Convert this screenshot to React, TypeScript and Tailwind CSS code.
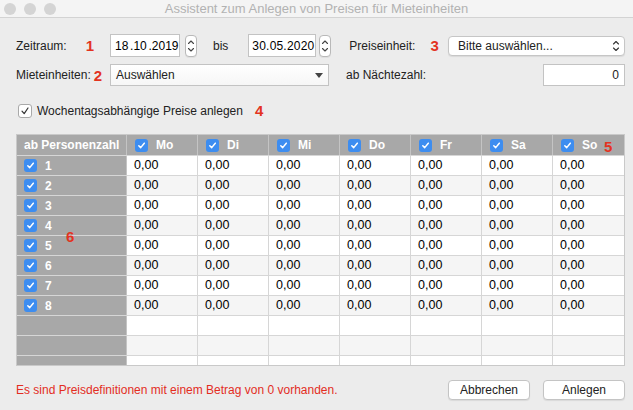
import React from 'react';

const days = ['Mo', 'Di', 'Mi', 'Do', 'Fr', 'Sa', 'So'];
const persons = [1, 2, 3, 4, 5, 6, 7, 8];

function BlueCheck() {
  return (
    <span className="inline-flex h-[13px] w-[13px] shrink-0 items-center justify-center rounded-[3px] bg-[#3d8df0]">
      <svg width="9" height="9" viewBox="0 0 9 9" fill="none">
        <path d="M1.8 4.7 L3.7 6.6 L7.3 2.2" stroke="white" strokeWidth="1.5" strokeLinecap="round" strokeLinejoin="round" />
      </svg>
    </span>
  );
}

function Stepper() {
  return (
    <div className="flex h-[22px] w-[12px] flex-col items-center justify-center rounded-[4px] border border-[#b9b9b9] bg-white shadow-[0_1px_0_rgba(0,0,0,0.05)]">
      <svg width="8" height="16" viewBox="0 0 8 16" fill="none">
        <path d="M1.5 5.5 L4 3 L6.5 5.5" stroke="#444" strokeWidth="1.1" strokeLinecap="round" strokeLinejoin="round" />
        <path d="M1.5 10.5 L4 13 L6.5 10.5" stroke="#444" strokeWidth="1.1" strokeLinecap="round" strokeLinejoin="round" />
      </svg>
    </div>
  );
}

function Marker({ children, className = '' }: { children: React.ReactNode; className?: string }) {
  return <span className={`text-[15px] font-bold leading-none text-[#e3331f] ${className}`}>{children}</span>;
}

export default function App() {
  return (
    <div
      className="relative h-[410px] w-[633px] overflow-hidden bg-[#ececec] text-[12px] text-[#222]"
      style={{ fontFamily: '"Liberation Sans", Arial, sans-serif' }}
    >
      {/* title bar */}
      <div className="relative flex h-[18px] items-center border-b border-[#d3d3d3] bg-[#f4f4f4]">
        <div className="flex gap-[8px] pl-[4px]">
          <span className="h-[12px] w-[12px] rounded-full bg-[#d4d4d4]" />
          <span className="h-[12px] w-[12px] rounded-full bg-[#d4d4d4]" />
          <span className="h-[12px] w-[12px] rounded-full bg-[#d4d4d4]" />
        </div>
        <div className="absolute inset-0 flex items-center justify-center text-[13px] text-[#b2b2b2]">
          Assistent zum Anlegen von Preisen für Mieteinheiten
        </div>
      </div>

      <div className="pl-[16px] pr-[8px]">
        {/* row 1 */}
        <div className="mt-[16px] flex h-[23px] items-center">
          <div className="flex w-[94px] items-center">
            <span>Zeitraum:</span>
            <Marker className="ml-[19px]">1</Marker>
          </div>
          <div className="flex h-[23px] w-[70px] items-center overflow-hidden whitespace-nowrap border border-[#c3c3c3] bg-white pl-[4px] text-[12px] text-black [word-spacing:-1.6px]">
            18 .10 .2019
          </div>
          <div className="ml-[5px]"><Stepper /></div>
          <span className="ml-[16px]">bis</span>
          <div className="ml-[20px] flex h-[23px] w-[68px] items-center overflow-hidden whitespace-nowrap border border-[#c3c3c3] bg-white pl-[3px] text-[12px] tracking-[0.2px] text-black">
            30.05.2020
          </div>
          <div className="ml-[3px]"><Stepper /></div>
          <span className="ml-[18px]">Preiseinheit:</span>
          <Marker className="ml-[15px]">3</Marker>
          <div className="ml-auto flex h-[20px] w-[177px] items-center justify-between rounded-[4px] border border-[#c6c6c6] bg-white pl-[9px] pr-[4px] shadow-[0_1px_1px_rgba(0,0,0,0.08)]">
            <span>Bitte auswählen...</span>
            <svg width="8" height="14" viewBox="0 0 8 14" fill="none">
              <path d="M1.5 5 L4 2.5 L6.5 5" stroke="#333" strokeWidth="1.1" strokeLinecap="round" strokeLinejoin="round" />
              <path d="M1.5 9 L4 11.5 L6.5 9" stroke="#333" strokeWidth="1.1" strokeLinecap="round" strokeLinejoin="round" />
            </svg>
          </div>
        </div>

        {/* row 2 */}
        <div className="mt-[7px] flex h-[22px] items-center">
          <div className="flex w-[94px] items-center">
            <span>Mieteinheiten:</span>
            <Marker className="ml-[3px]">2</Marker>
          </div>
          <div className="flex h-[22px] w-[219px] items-center justify-between border border-[#c3c3c3] bg-gradient-to-b from-white to-[#f6f6f6] pl-[5px] pr-[5px]">
            <span>Auswählen</span>
            <svg width="8" height="5" viewBox="0 0 8 5"><path d="M0 0 H8 L4 5 Z" fill="#444" /></svg>
          </div>
          <span className="ml-[17px]">ab Nächtezahl:</span>
          <div className="ml-auto flex h-[22px] w-[82px] items-center justify-end border border-[#c3c3c3] bg-white pr-[5px]">
            0
          </div>
        </div>

        {/* checkbox row */}
        <div className="mt-[16px] flex h-[17px] items-center">
          <span className="ml-[2px] flex h-[14px] w-[14px] items-center justify-center rounded-[3px] border border-[#a9a9a9] bg-white">
            <svg width="10" height="10" viewBox="0 0 10 10" fill="none">
              <path d="M2 5.2 L4.2 7.6 L8 2" stroke="#333" strokeWidth="1.2" strokeLinecap="round" strokeLinejoin="round" />
            </svg>
          </span>
          <span className="ml-[5px]">Wochentagsabhängige Preise anlegen</span>
          <Marker className="ml-[12px]">4</Marker>
        </div>

        {/* table */}
        <div className="relative mt-[15px] h-[232px] overflow-hidden border border-[#c9c9c9] bg-white">
          <div className="grid h-[20px] grid-cols-[110px_repeat(6,71px)_1fr] bg-[#a8a8a8] font-bold text-white">
            <div className="flex items-center border-r border-[#c4c4c4] pl-[7px]">ab Personenzahl</div>
            {days.map((d, i) => (
              <div key={d} className={`flex items-center pl-[8px] ${i < 6 ? 'border-r border-[#c4c4c4]' : ''}`}>
                <BlueCheck />
                <span className="ml-[8px]">{d}</span>
              </div>
            ))}
          </div>
          {persons.map((p, r) => (
            <div
              key={p}
              className={`grid h-[20px] grid-cols-[110px_repeat(6,71px)_1fr] border-t border-[#d6d6d6] ${r % 2 ? 'bg-[#f5f5f5]' : 'bg-white'}`}
            >
              <div className="flex items-center border-r border-[#c4c4c4] bg-[#a8a8a8] pl-[7px] font-bold text-white">
                <BlueCheck />
                <span className="ml-[8px]">{p}</span>
              </div>
              {days.map((d, i) => (
                <div key={d} className={`flex items-center pl-[7px] text-[12.5px] text-black ${i < 6 ? 'border-r border-[#d6d6d6]' : ''}`}>
                  0,00
                </div>
              ))}
            </div>
          ))}
          {[0, 1, 2].map((r) => (
            <div
              key={r}
              className={`grid h-[20px] grid-cols-[110px_repeat(6,71px)_1fr] border-t border-[#d6d6d6] ${r % 2 ? 'bg-[#f5f5f5]' : 'bg-white'}`}
            >
              <div className="border-r border-[#c4c4c4] bg-[#a8a8a8]" />
              {days.map((d, i) => (
                <div key={d} className={i < 6 ? 'border-r border-[#d6d6d6]' : ''} />
              ))}
            </div>
          ))}
          <Marker className="absolute left-[587px] top-[4px]">5</Marker>
          <Marker className="absolute left-[49px] top-[94px]">6</Marker>
        </div>

        {/* footer */}
        <div className="mt-[14px] flex h-[20px] items-center">
          <span className="text-[#e32d1f]">Es sind Preisdefinitionen mit einem Betrag von 0 vorhanden.</span>
          <button className="ml-auto flex h-[20px] w-[82px] items-center justify-center rounded-[4px] border border-[#c4c4c4] bg-white text-[12px] text-[#222] shadow-[0_1px_1px_rgba(0,0,0,0.08)]">
            Abbrechen
          </button>
          <button className="ml-[13px] flex h-[20px] w-[82px] items-center justify-center rounded-[4px] border border-[#c4c4c4] bg-white text-[12px] text-[#222] shadow-[0_1px_1px_rgba(0,0,0,0.08)]">
            Anlegen
          </button>
        </div>
      </div>
    </div>
  );
}
